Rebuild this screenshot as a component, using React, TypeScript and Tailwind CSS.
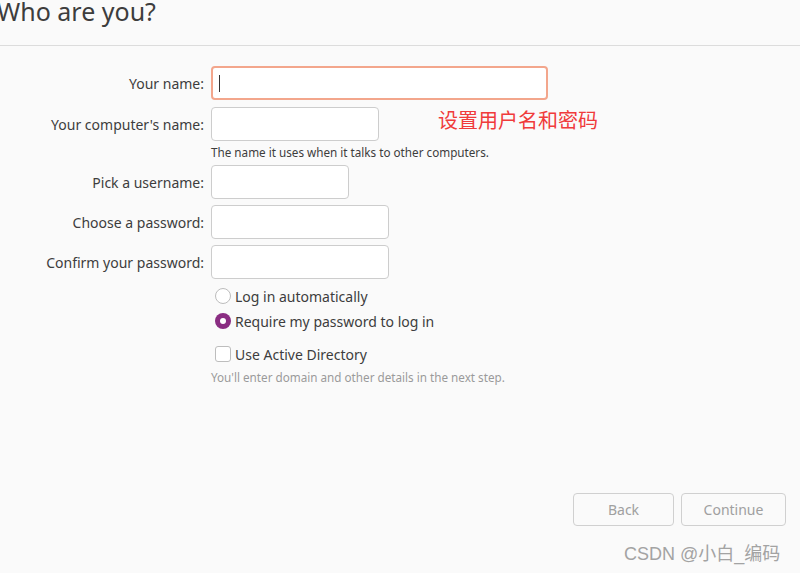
import React from 'react';

const font = { fontFamily: '"Noto Sans", "Noto Sans CJK SC", sans-serif' };

function Row({ label, width, focused }: { label: string; width: string; focused?: boolean }) {
  return (
    <div className="flex items-center">
      <div className="w-[205px] shrink-0 pr-[1px] text-right text-[14px] text-[#3d3d3d]">{label}</div>
      <div
        className={`ml-[6px] h-[34px] bg-white rounded-[4px] flex items-center ${width} ${
          focused ? 'border-2 border-[#f3a68c]' : 'border border-[#cdcdcd]'
        }`}
      >
        {focused && <div className="ml-[6px] w-px h-[17px] bg-[#333]" />}
      </div>
    </div>
  );
}

export default function App() {
  return (
    <div className="w-[800px] h-[573px] bg-[#fafafa] overflow-hidden relative" style={font}>
      <div className="h-[52px] border-b border-[#dcdcdc] -mt-[6px]">
        <h1 className="text-[25px] leading-[34px] text-[#3d3d3d] -ml-[3px]">Who are you?</h1>
      </div>

      <div className="pt-[20px] flex flex-col">
        <Row label="Your name:" width="w-[337px]" focused />
        <div className="mt-[7px] flex items-center">
          <Row label="Your computer's name:" width="w-[168px]" />
          <span className="ml-[59px] -mt-[6px] text-[20px] text-[#f03b3b]">设置用户名和密码</span>
        </div>
        <div className="ml-[211px] mt-[3px] text-[11.7px] text-[#3d3d3d] leading-[16px]">
          The name it uses when it talks to other computers.
        </div>
        <div className="mt-[5px]">
          <Row label="Pick a username:" width="w-[138px]" />
        </div>
        <div className="mt-[6px]">
          <Row label="Choose a password:" width="w-[178px]" />
        </div>
        <div className="mt-[6px]">
          <Row label="Confirm your password:" width="w-[178px]" />
        </div>

        <div className="ml-[215px] mt-[8px] flex flex-col">
          <label className="flex items-center h-[18px] text-[14px] text-[#3d3d3d]">
            <span className="w-[16px] h-[16px] rounded-full border border-[#bdbdbd] bg-white" />
            <span className="ml-[4px]">Log in automatically</span>
          </label>
          <label className="mt-[7px] flex items-center h-[18px] text-[14px] text-[#3d3d3d]">
            <span className="w-[16px] h-[16px] rounded-full bg-[#8a2d82] flex items-center justify-center">
              <span className="w-[6px] h-[6px] rounded-full bg-white" />
            </span>
            <span className="ml-[4px]">Require my password to log in</span>
          </label>
          <label className="mt-[15px] flex items-center h-[18px] text-[14px] text-[#3d3d3d]">
            <span className="w-[16px] h-[16px] rounded-[3px] border border-[#bdbdbd] bg-white" />
            <span className="ml-[4px]">Use Active Directory</span>
          </label>
        </div>
        <div className="ml-[211px] mt-[6px] text-[11.7px] text-[#9a9a9a] leading-[16px]">
          You'll enter domain and other details in the next step.
        </div>
      </div>

      <div className="absolute left-[573px] top-[493px] flex gap-[7px]">
        <button className="w-[101px] h-[33px] rounded-[4px] border border-[#d0d0d0] text-[14px] text-[#a0a0a0] bg-[#fafafa]">
          Back
        </button>
        <button className="w-[105px] h-[33px] rounded-[4px] border border-[#d0d0d0] text-[14px] text-[#a0a0a0] bg-[#fafafa]">
          Continue
        </button>
      </div>

      <div
        className="absolute left-[624px] top-[541px] text-[18px] text-[#a3a3a3]"
        style={{ fontFamily: '"Liberation Sans", "Noto Sans CJK SC", sans-serif' }}
      >
        CSDN @小白_编码
      </div>
    </div>
  );
}
